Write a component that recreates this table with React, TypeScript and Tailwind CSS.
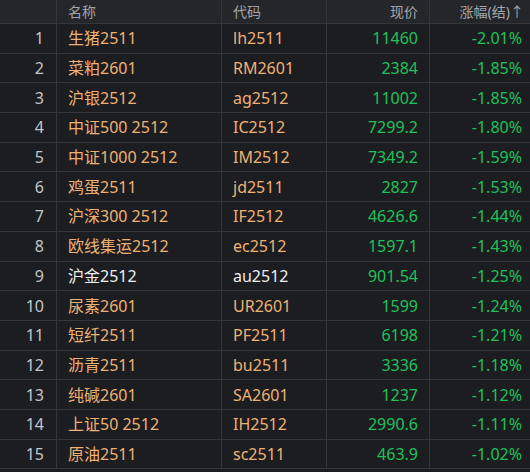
import React from "react";

type Row = { name: string; code: string; price: string; pct: string; white?: boolean };

const rows: Row[] = [
  { name: "生猪2511", code: "lh2511", price: "11460", pct: "-2.01%" },
  { name: "菜粕2601", code: "RM2601", price: "2384", pct: "-1.85%" },
  { name: "沪银2512", code: "ag2512", price: "11002", pct: "-1.85%" },
  { name: "中证500 2512", code: "IC2512", price: "7299.2", pct: "-1.80%" },
  { name: "中证1000 2512", code: "IM2512", price: "7349.2", pct: "-1.59%" },
  { name: "鸡蛋2511", code: "jd2511", price: "2827", pct: "-1.53%" },
  { name: "沪深300 2512", code: "IF2512", price: "4626.6", pct: "-1.44%" },
  { name: "欧线集运2512", code: "ec2512", price: "1597.1", pct: "-1.43%" },
  { name: "沪金2512", code: "au2512", price: "901.54", pct: "-1.25%", white: true },
  { name: "尿素2601", code: "UR2601", price: "1599", pct: "-1.24%" },
  { name: "短纤2511", code: "PF2511", price: "6198", pct: "-1.21%" },
  { name: "沥青2511", code: "bu2511", price: "3336", pct: "-1.18%" },
  { name: "纯碱2601", code: "SA2601", price: "1237", pct: "-1.12%" },
  { name: "上证50 2512", code: "IH2512", price: "2990.6", pct: "-1.11%" },
  { name: "原油2511", code: "sc2511", price: "463.9", pct: "-1.02%" },
];

const font = { fontFamily: '"Noto Sans", "Noto Sans CJK SC", sans-serif' };

export default function App() {
  const grid = "grid grid-cols-[57px_165px_105px_103px_1fr]";
  const cell = "border-r border-[#35363a] flex items-center";
  return (
    <div className="w-[530px] h-[472px] overflow-hidden bg-[#1c1d21]" style={font}>
      <div className={`${grid} h-[24px] bg-[#25262a] border-b border-[#35363a] text-[14px] text-[#a3a4a8]`}>
        <div className={cell}></div>
        <div className={`${cell} pl-[11px]`}>名称</div>
        <div className={`${cell} pl-[11px]`}>代码</div>
        <div className={`${cell} justify-end pr-[11px]`}>现价</div>
        <div className="flex items-center justify-end pr-[6px]">涨幅(结)↑</div>
      </div>
      {rows.map((r, i) => {
        const c = r.white ? "text-[#eeeeee]" : "text-[#eeb174]";
        return (
          <div
            key={i}
            className={`${grid} h-[29.7px] border-b border-[#35363a] text-[16px] leading-none`}
          >
            <div className={`${cell} justify-end pr-[12px] text-[#c4c5c9]`}>{i + 1}</div>
            <div className={`${cell} pl-[11px] ${c}`}>{r.name}</div>
            <div className={`${cell} pl-[11px] ${c}`}>{r.code}</div>
            <div className={`${cell} justify-end pr-[11px] text-[#20c15a]`}>{r.price}</div>
            <div className="flex items-center justify-end pr-[8px] text-[#20c15a]">{r.pct}</div>
          </div>
        );
      })}
    </div>
  );
}
